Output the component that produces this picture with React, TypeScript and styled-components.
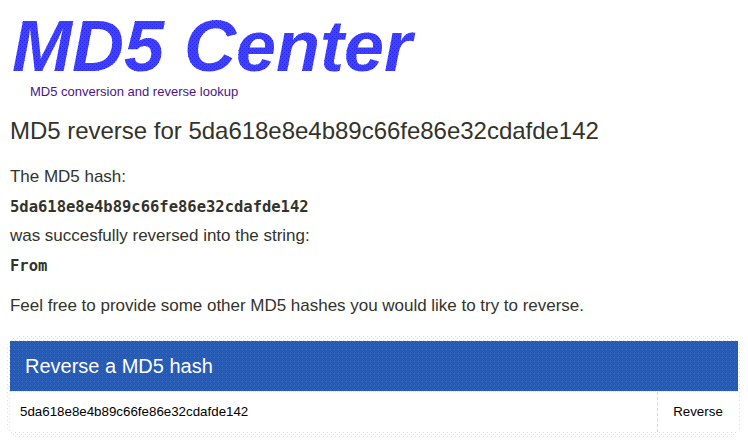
import React from "react";
import styled, { createGlobalStyle } from "styled-components";

const Global = createGlobalStyle`
  * { box-sizing: border-box; }
  body { margin: 0; background: #fff; color: #33332b; font-family: "Liberation Sans", Arial, sans-serif; }
`;

const Page = styled.main`
  display: flex;
  flex-direction: column;
  width: 748px;
  height: 443px;
  padding: 12px 10px 0;
  overflow: hidden;
`;

const Logo = styled.h1`
  margin: 0 0 0 2px;
  height: 72px;
  line-height: 68px;
  font-size: 72px;
  font-weight: 700;
  font-style: italic;
  white-space: nowrap;
  color: transparent;
  background:
    conic-gradient(at 1px 1px, transparent 75%, #2424ee 0) 0 0 / 4px 4px,
    conic-gradient(at 1px 1px, transparent 75%, #2424ee 0) 2px 2px / 4px 4px,
    #4040ff;
  -webkit-background-clip: text;
  background-clip: text;
`;

const Tagline = styled.a`
  height: 15px;
  margin-left: 20px;
  font-size: 13px;
  line-height: 15px;
  color: #4b1488;
`;

const Title = styled.h2`
  margin: 18px 0 0;
  height: 28px;
  font-size: 24px;
  line-height: 28px;
  font-weight: 400;
  letter-spacing: -0.02px;
`;

const Text = styled.p<{ $gap: number }>`
  margin: ${(p) => p.$gap}px 0 0;
  height: 20px;
  font-size: 17px;
  line-height: 20px;
  letter-spacing: -0.02px;
`;

const Code = styled.code`
  display: block;
  margin-top: 10px;
  height: 20px;
  font: 700 15.5px/20px "DejaVu Sans Mono", monospace;
`;

const Panel = styled.form`
  position: relative;
  z-index: 0;
  margin: 25px 0 0;
  width: 728px;
  height: 91px;
  background: #fff;

  &::before {
    content: "";
    position: absolute;
    z-index: -1;
    inset: -5px -3px;
    border-radius: 12px;
    background:
      conic-gradient(at 1px 1px, transparent 75%, #d8d8ff 0) 0 0 / 4px 4px,
      conic-gradient(at 1px 1px, transparent 75%, #d8d8ff 0) 2px 2px / 4px 4px;
  }
`;

const PanelHeader = styled.header`
  height: 50px;
  padding-left: 15px;
  font-size: 20px;
  line-height: 50px;
  color: #fff;
  background:
    conic-gradient(at 1px 1px, transparent 75%, #4068b8 0) 0 0 / 4px 4px,
    conic-gradient(at 1px 1px, transparent 75%, #2458b4 0) 2px 2px / 4px 4px,
    repeating-conic-gradient(#2c60b8 0 25%, #304cb8 0 50%) 0 0 / 2px 2px;
`;

const Fields = styled.div`
  display: flex;
  height: 41px;
  background: #fff;
  border-top: 1px dotted #d8d8ff;
`;

const Input = styled.input`
  flex: 1;
  min-width: 0;
  padding: 0 10px 1px;
  border: 0;
  border-right: 1px dashed #d4d4ff;
  outline: 0;
  background: #fff;
  color: #000;
  font: 13.333px "Liberation Sans", Arial, sans-serif;
`;

const Submit = styled.button`
  width: 80px;
  padding: 0 0 1px;
  border: 0;
  background: #fff;
  color: #000;
  font: 13.333px "Liberation Sans", Arial, sans-serif;
`;

const HASH = "5da618e8e4b89c66fe86e32cdafde142";

export default function App() {
  return (
    <Page>
      <Global />
      <Logo>MD5 Center</Logo>
      <Tagline>MD5 conversion and reverse lookup</Tagline>
      <Title>MD5 reverse for {HASH}</Title>
      <Text $gap={22}>The MD5 hash:</Text>
      <Code>{HASH}</Code>
      <Text $gap={9}>was succesfully reversed into the string:</Text>
      <Code>From</Code>
      <Text $gap={20}>Feel free to provide some other MD5 hashes you would like to try to reverse.</Text>
      <Panel>
        <PanelHeader>Reverse a MD5 hash</PanelHeader>
        <Fields>
          <Input defaultValue={HASH} />
          <Submit type="button">Reverse</Submit>
        </Fields>
      </Panel>
    </Page>
  );
}
